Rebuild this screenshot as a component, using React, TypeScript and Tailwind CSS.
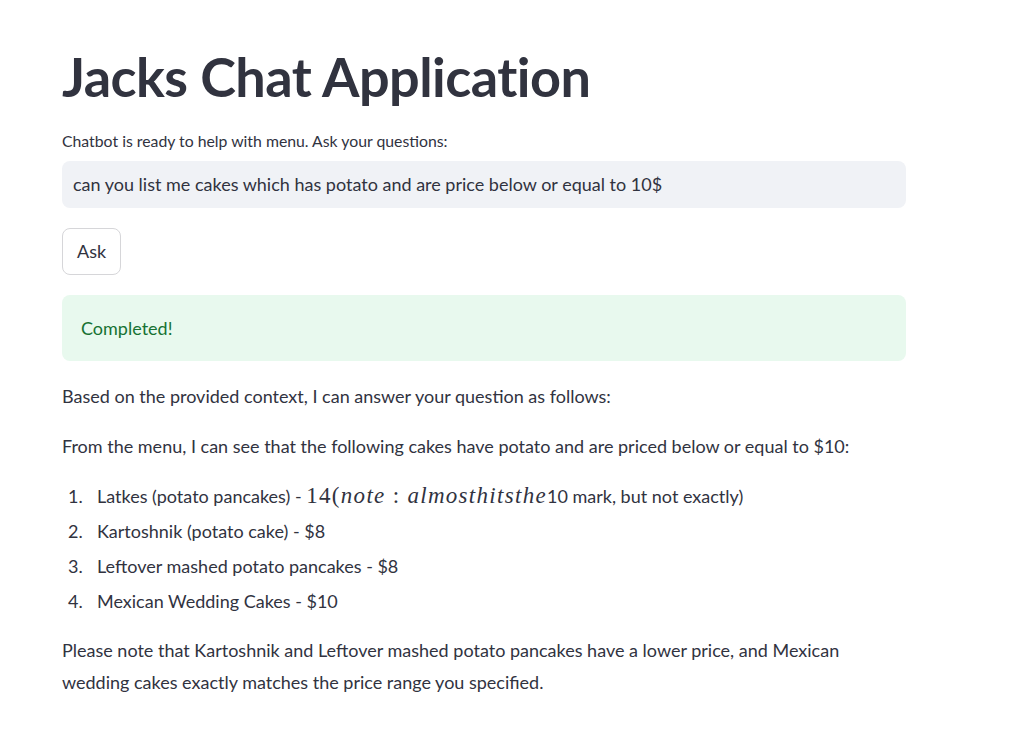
export default function App() {
  const items = [
    "Kartoshnik (potato cake) - $8",
    "Leftover mashed potato pancakes - $8",
    "Mexican Wedding Cakes - $10",
  ];

  return (
    <div
      className="min-h-screen bg-white text-[#31333f]"
      style={{ fontFamily: "Lato, 'Noto Sans', sans-serif" }}
    >
      <div className="ml-[62px] w-[844px] pt-[47px]">
        <h1 className="text-[54px] font-bold leading-[60px] tracking-[-0.01em]">
          Jacks Chat Application
        </h1>

        <label className="mt-[24px] block text-[15.8px] leading-[20px]">
          Chatbot is ready to help with menu. Ask your questions:
        </label>
        <div className="mt-[10px] flex h-[47px] items-center rounded-lg bg-[#f0f2f6] px-[11px] text-[18px]">
          can you list me cakes which has potato and are price below or equal to 10$
        </div>

        <button className="mt-[20px] block h-[47px] rounded-lg border border-[#d6d6d9] bg-white px-[14px] text-[18px]">
          Ask
        </button>

        <div className="mt-[20px] flex h-[66px] items-center rounded-lg bg-[#e8f9ee] px-[19px] text-[18px] text-[#177233]">
          Completed!
        </div>

        <p className="mt-[19px] text-[18px] leading-[32px]">
          Based on the provided context, I can answer your question as follows:
        </p>
        <p className="mt-[18px] text-[18px] leading-[32px]">
          From the menu, I can see that the following cakes have potato and are
          priced below or equal to $10:
        </p>

        <ol className="mt-[17px] text-[18px]">
          <li className="flex h-[35px] items-center">
            <span className="w-[35px] pl-[6px]">1.</span>
            <span className="whitespace-nowrap">
              Latkes (potato pancakes) -{" "}
              <span
                className="text-[23px] tracking-[1.3px]"
                style={{ fontFamily: "'Liberation Serif', serif" }}
              >
                14(<i>note</i> : <i>almosthitsthe</i>
              </span>
              10 mark, but not exactly)
            </span>
          </li>
          {items.map((t, i) => (
            <li key={t} className="flex h-[35px] items-center">
              <span className="w-[35px] pl-[6px]">{i + 2}.</span>
              <span>{t}</span>
            </li>
          ))}
        </ol>

        <p className="mt-[15px] text-[18px] leading-[32px]">
          Please note that Kartoshnik and Leftover mashed potato pancakes have a
          lower price, and Mexican wedding cakes exactly matches the price range
          you specified.
        </p>
      </div>
    </div>
  );
}
